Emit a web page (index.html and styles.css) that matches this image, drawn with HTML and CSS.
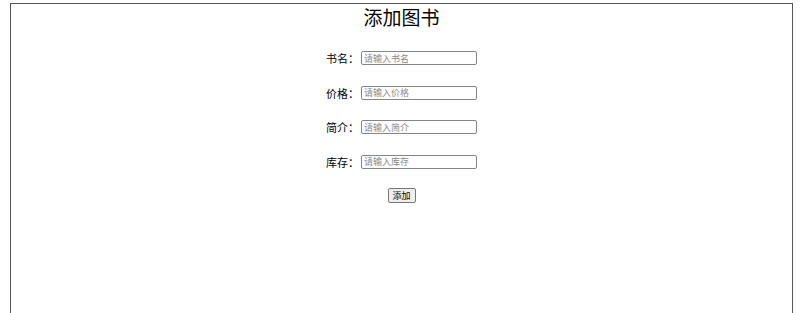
FILE: index.html
```html
<!DOCTYPE html>
<html lang="zh">
<head>
<meta charset="utf-8">
<title>添加图书</title>
<link rel="stylesheet" href="styles.css">
</head>
<body>
<div class="panel">
  <h1 class="title">添加图书</h1>
  <form class="form">
    <div class="row"><label class="label">书名：</label><input class="field" type="text" placeholder="请输入书名"></div>
    <div class="row"><label class="label">价格：</label><input class="field" type="text" placeholder="请输入价格"></div>
    <div class="row"><label class="label">简介：</label><input class="field" type="text" placeholder="请输入简介"></div>
    <div class="row"><label class="label">库存：</label><input class="field" type="text" placeholder="请输入库存"></div>
    <div class="row actions"><button class="btn" type="button">添加</button></div>
  </form>
</div>
</body>
</html>
```
FILE: styles.css
```css
html, body {
  margin: 0;
  padding: 0;
  background: #fff;
  overflow: hidden;
}
body {
  font-family: "Noto Sans CJK SC", "Noto Sans", sans-serif;
  color: #000;
}
.panel {
  margin: 3px 7px 0 10px;
  height: 310px;
  border: 1px solid #555;
  border-bottom: none;
  box-sizing: border-box;
}
.title {
  margin: 0;
  font-size: 19px;
  line-height: 26px;
  font-weight: normal;
  text-align: center;
}
.form {
  margin: 21px 0 0;
  display: flex;
  flex-direction: column;
  align-items: center;
  gap: 20.5px;
}
.row {
  display: flex;
  align-items: center;
  height: 14px;
}
.label {
  font-size: 11px;
  line-height: 14px;
  width: 35px;
}
.field {
  box-sizing: border-box;
  width: 116px;
  height: 14px;
  margin: 0;
  padding: 0 2px;
  border: 1px solid #858585;
  border-radius: 2px;
  font-family: "Noto Sans CJK SC", sans-serif;
  font-size: 9px;
  line-height: 12px;
  outline: none;
}
.field::placeholder {
  color: #8a8a8a;
}
.actions {
  height: 15px;
  margin-top: -1px;
}
.btn {
  box-sizing: border-box;
  width: 28px;
  height: 15px;
  margin: 0;
  padding: 0;
  font-family: "Noto Sans CJK SC", sans-serif;
  font-size: 9px;
  line-height: 13px;
  color: #000;
  background: #efefef;
  border: 1px solid #777;
  border-radius: 2px;
}
```
